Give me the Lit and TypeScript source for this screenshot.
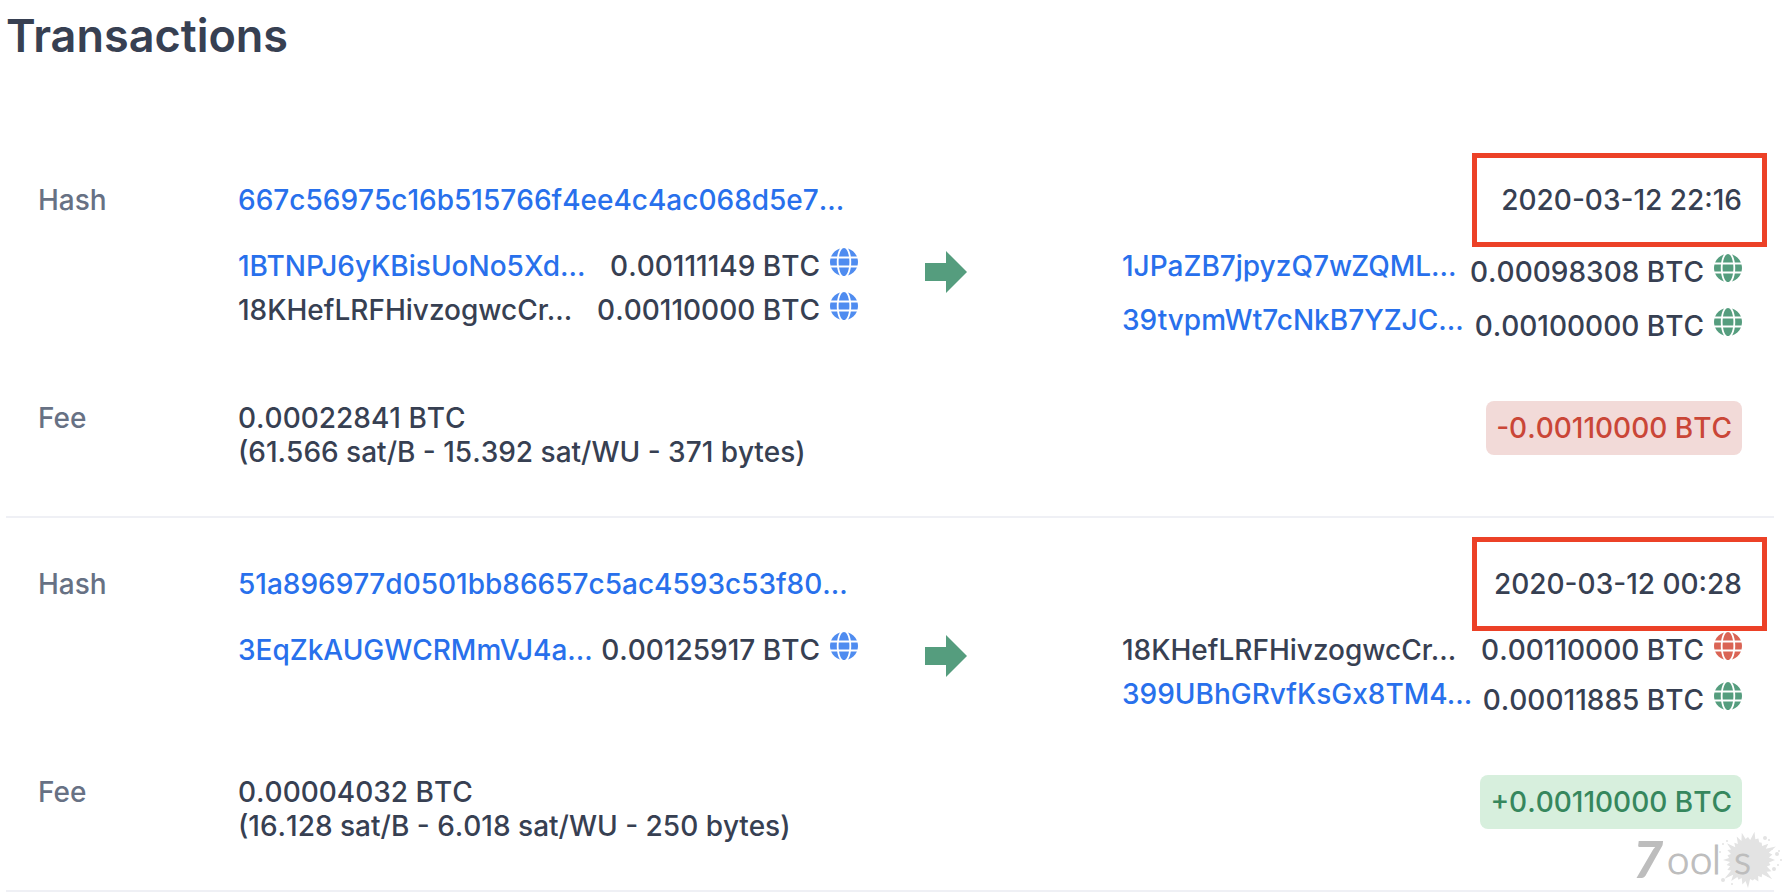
import { LitElement, html, svg, css } from "lit";
import { customElement, property } from "lit/decorators.js";

type Tone = "blue" | "green" | "red";

interface Entry {
  address: string;
  amount: string;
  tone: Tone;
  link: boolean;
}

interface Transaction {
  hash: string;
  time: string;
  inputs: Entry[];
  outputs: Entry[];
  fee: string;
  rate: string;
  change: string;
}

const TRANSACTIONS: Transaction[] = [
  {
    hash: "667c56975c16b515766f4ee4c4ac068d5e7...",
    time: "2020-03-12 22:16",
    inputs: [
      { address: "1BTNPJ6yKBisUoNo5Xd...", amount: "0.00111149 BTC", tone: "blue", link: true },
      { address: "18KHefLRFHivzogwcCr...", amount: "0.00110000 BTC", tone: "blue", link: false },
    ],
    outputs: [
      { address: "1JPaZB7jpyzQ7wZQML...", amount: "0.00098308 BTC", tone: "green", link: true },
      { address: "39tvpmWt7cNkB7YZJC...", amount: "0.00100000 BTC", tone: "green", link: true },
    ],
    fee: "0.00022841 BTC",
    rate: "(61.566 sat/B - 15.392 sat/WU - 371 bytes)",
    change: "-0.00110000 BTC",
  },
  {
    hash: "51a896977d0501bb86657c5ac4593c53f80...",
    time: "2020-03-12 00:28",
    inputs: [
      { address: "3EqZkAUGWCRMmVJ4a...", amount: "0.00125917 BTC", tone: "blue", link: true },
    ],
    outputs: [
      { address: "18KHefLRFHivzogwcCr...", amount: "0.00110000 BTC", tone: "red", link: false },
      { address: "399UBhGRvfKsGx8TM4...", amount: "0.00011885 BTC", tone: "green", link: true },
    ],
    fee: "0.00004032 BTC",
    rate: "(16.128 sat/B - 6.018 sat/WU - 250 bytes)",
    change: "+0.00110000 BTC",
  },
];

@customElement("globe-icon")
class GlobeIcon extends LitElement {
  static styles = css`
    :host { display: block; width: 28px; height: 28px; margin-top: -1px; flex: none; }
    svg { display: block; width: 100%; height: 100%; }
  `;
  render() {
    return html`<svg viewBox="0 0 496 496" fill="currentColor" aria-hidden="true">
      <path d="M336.500 152C321.700 60.500 287.500 0 248 0s-73.700 60.500-88.500 152h177zM152 248c0 22.200 1.200 43.500 3.300 64h185.300c2.100-20.500 3.300-41.800 3.300-64s-1.200-43.500-3.300-64H155.300c-2.100 20.500-3.300 41.800-3.300 64zm324.700-96c-28.600-67.900-86.500-120.400-158-141.600 24.400 33.800 41.200 84.700 50 141.600h108zM177.200 10.400C105.800 31.600 47.800 84.100 19.300 152h108c8.700-56.900 25.500-107.800 49.900-141.600zM487.400 184H372.700c2.100 21 3.300 42.500 3.300 64s-1.200 43-3.300 64h114.600c5.500-20.500 8.600-41.800 8.600-64s-3.100-43.500-8.500-64zM120 248c0-21.500 1.200-43 3.300-64H8.600C3.200 204.500 0 225.800 0 248s3.200 43.500 8.600 64h114.600c-2-21-3.200-42.500-3.200-64zm39.500 96c14.800 91.500 49 152 88.500 152s73.700-60.500 88.500-152h-177zm159.300 141.600c71.400-21.200 129.400-73.700 158-141.600h-108c-8.800 56.900-25.600 107.800-50 141.600zM19.300 344c28.600 67.900 86.500 120.400 158 141.600-24.400-33.800-41.200-84.700-50-141.600h-108z"/>
    </svg>`;
  }
}

@customElement("site-mark")
class SiteMark extends LitElement {
  static styles = css`
    :host { display: block; width: 152px; height: 58px; pointer-events: none; }
    svg { display: block; width: 100%; height: 100%; overflow: visible; }
    .splat { fill: #e3e3e3; }
    .seven { font: italic 900 52px Lato, sans-serif; fill: #bdbdbd; }
    .rest { font: 300 40px Lato, sans-serif; fill: #bdbdbd; stroke: #bdbdbd; stroke-width: 1; }
  `;
  private splat() {
    const reach = [
      27, 21, 23, 20, 26, 22, 31, 20, 22, 19, 24, 20, 21, 19, 28, 21, 25, 19, 22, 20, 27, 21, 30, 20, 23, 19, 22, 18,
      25, 19, 21, 18, 23, 20, 27, 18, 22, 19, 26, 20, 28, 21, 23, 20, 29, 22, 24, 21, 22, 20, 26, 21, 31, 22, 25, 21,
    ];
    const points = reach.map((r, i) => {
      const a = (i / reach.length) * Math.PI * 2;
      return `${(117 + r * Math.cos(a)).toFixed(1)},${(28 + r * Math.sin(a)).toFixed(1)}`;
    });
    const drops = [
      [146, 22, 2], [150, 28, 1], [141, 17, 1], [143, 37, 2], [147, 33, 1], [138, 8, 1], [134, 6, 2],
      [92, 48, 2], [92, 12, 1], [96, 9, 1], [148, 19, 1], [101, 52, 1], [137, 44, 1], [89, 20, 1],
    ];
    return svg`<polygon class="splat" points=${points.join(" ")}/>
      ${drops.map(([x, y, r]) => svg`<circle class="splat" cx=${x} cy=${y} r=${r}/>`)}`;
  }
  render() {
    return html`<svg viewBox="0 0 152 58" role="img" aria-label="7ools">
      ${this.splat()}
      <text class="seven" x="2" y="46">7</text>
      <text class="rest" x="36 59 81 103" y="42">ools</text>
    </svg>`;
  }
}

@customElement("entry-row")
class EntryRow extends LitElement {
  @property({ attribute: false }) entry!: Entry;
  @property({ type: Boolean }) spent = false;

  static styles = css`
    :host { display: block; }
    .row { display: flex; justify-content: space-between; align-items: flex-start; margin-bottom: 10px; white-space: nowrap; }
    a { color: #2870ec; text-decoration: none; }
    .amount { display: flex; align-items: flex-start; gap: 10px; font-kerning: none; }
    .lowered { padding: 6px 0 4px; }
    .blue { color: #4f8cf0; }
    .green { color: #559d7e; }
    .red { color: #da6455; }
  `;
  render() {
    const e = this.entry;
    return html`<div class="row">
      ${e.link ? html`<a href="#${e.address}">${e.address}</a>` : html`<span>${e.address}</span>`}
      <span class="amount ${this.spent && e.link ? "lowered" : ""}">
        <span>${e.amount}</span><globe-icon class=${e.tone}></globe-icon>
      </span>
    </div>`;
  }
}

@customElement("transaction-card")
class TransactionCard extends LitElement {
  @property({ attribute: false }) tx!: Transaction;

  static styles = css`
    :host { display: block; }
    .card {
      display: grid;
      grid-template-columns: 200px minmax(0, 620px) minmax(0, 1fr) minmax(0, 620px);
      padding: 49px 32px 47px;
      border-bottom: 2px solid #eff0f5;
    }
    .label { color: #677184; }
    .wide { grid-column: 2 / 4; }
    .hash, .time, .badge, .fee { font-kerning: none; }
    .hash { color: #2870ec; text-decoration: none; }
    .time { justify-self: end; position: relative; }
    .mark { position: absolute; right: -25px; top: -30px; width: 295px; height: 94px; box-sizing: border-box; border: 5px solid #ec4127; }
    .flow { padding-top: 32px; padding-bottom: 44px; }
    .from { grid-column: 2; }
    .arrow { display: block; width: 42px; height: 42px; margin: 2px 0 0 67px; color: #559d7e; }
    .fee p { margin: 0; }
    .end { justify-self: end; }
    .badge { padding: 10px; border-radius: 8px; display: inline-block; }
    .minus { color: #ca4637; background: #f2dad8; }
    .plus { color: #36875d; background: #d7efdd; }
  `;
  render() {
    const t = this.tx;
    return html`<article class="card">
      <span class="label">Hash</span>
      <div class="wide"><a class="hash" href="#${t.hash}">${t.hash}</a></div>
      <time class="time">${t.time}<span class="mark"></span></time>
      <div class="flow from">${t.inputs.map((e) => html`<entry-row .entry=${e}></entry-row>`)}</div>
      <div class="flow">
        <svg class="arrow" viewBox="0 0 42 42" fill="currentColor" aria-hidden="true"><path d="M0 12h21V0l21 21-21 21V30H0z"/></svg>
      </div>
      <div class="flow">${t.outputs.map((e) => html`<entry-row .entry=${e} spent></entry-row>`)}</div>
      <span class="label">Fee</span>
      <div class="wide fee"><p>${t.fee}</p><p>${t.rate}</p></div>
      <div class="end"><span class="badge ${t.change.startsWith("-") ? "minus" : "plus"}">${t.change}</span></div>
    </article>`;
  }
}

@customElement("app-root")
class AppRoot extends LitElement {
  static styles = css`
    :host {
      display: block;
      position: relative;
      background: #fff;
      color: #374052;
      font: 500 28px/34px Inter, "Liberation Sans", sans-serif;
    }
    main { padding: 8px 14px 2px 6px; }
    h1 { margin: 0 0 70px; font-size: 45px; line-height: 56px; font-weight: 600; }
    .logo { position: absolute; right: 5px; bottom: 4px; }
  `;
  render() {
    return html`<main>
        <h1>Transactions</h1>
        ${TRANSACTIONS.map((t) => html`<transaction-card .tx=${t}></transaction-card>`)}
      </main>
      <site-mark class="logo"></site-mark>`;
  }
}
